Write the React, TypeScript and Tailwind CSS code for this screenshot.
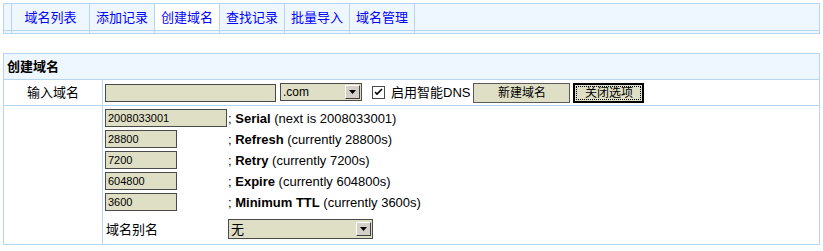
import React from "react";

const tabs = ["添加记录", "创建域名", "查找记录", "批量导入", "域名管理"];

const soaRows = [
  { value: "2008033001", wide: true, name: "Serial", note: "(next is 2008033001)" },
  { value: "28800", wide: false, name: "Refresh", note: "(currently 28800s)" },
  { value: "7200", wide: false, name: "Retry", note: "(currently 7200s)" },
  { value: "604800", wide: false, name: "Expire", note: "(currently 604800s)" },
  { value: "3600", wide: false, name: "Minimum TTL", note: "(currently 3600s)" },
];

function Arrow() {
  return (
    <div className="w-[15px] h-[14px] bg-[#d4d0c8] border-t border-l border-t-white border-l-white border-b border-r border-b-[#404040] border-r-[#404040] flex items-center justify-center">
      <svg width="7" height="4" viewBox="0 0 7 4">
        <path d="M0 0h7L3.5 4z" fill="#000" />
      </svg>
    </div>
  );
}

function Tab({ label, active, first }: { label: string; active?: boolean; first?: boolean }) {
  return (
    <div
      className={
        "flex flex-col border-r border-[#b5d5f2] " + (first ? "w-[78px]" : "w-[65px]")
      }
    >
      <div
        className={
          "h-[27px] flex items-center justify-center border-b border-[#b5d5f2] text-[#0000ff] " +
          (active ? "bg-white" : "")
        }
      >
        {label}
      </div>
      <div className="h-[2px]" />
    </div>
  );
}

export default function App() {
  return (
    <div className="w-[823px] h-[251px] bg-white pt-[3px] pl-[3px] text-[13px] leading-none text-black font-['Liberation_Sans','Noto_Sans_CJK_SC',sans-serif]">
      {/* tab bar */}
      <div className="w-[817px] flex border border-[#b5d5f2] bg-[#eef6ff]">
        <div className="w-[8px] flex flex-col border-r border-[#b5d5f2]">
          <div className="h-[27px] border-b border-[#b5d5f2]" />
          <div className="h-[2px]" />
        </div>
        <Tab label="域名列表" first />
        {tabs.map((t) => (
          <Tab key={t} label={t} active={t === "创建域名"} />
        ))}
        <div className="flex-1 flex flex-col">
          <div className="h-[27px] border-b border-[#b5d5f2]" />
          <div className="h-[2px]" />
        </div>
      </div>

      {/* create domain panel */}
      <div className="w-[817px] mt-[19px] border border-[#b5d5f2]">
        <div className="h-[26px] flex items-center pl-[3px] font-bold bg-[#eef6ff] border-b border-[#b5d5f2]">
          创建域名
        </div>

        <div className="h-[26px] flex items-center border-b border-[#b5d5f2]">
          <div className="w-[99px] h-full flex items-center justify-center border-r border-[#b5d5f2]">
            输入域名
          </div>
          <div className="flex items-center pl-[2px]">
            <div className="w-[171px] h-[18px] bg-[#dfdfc5] border border-[#4a4a4a]" />
            <div className="ml-[4px] mb-[2px] w-[82px] h-[18px] bg-[#dfdfc5] border border-[#4a4a4a] flex items-center justify-between pl-[2px] pr-px text-[12px]">
              <span>.com</span>
              <Arrow />
            </div>
            <div className="ml-[10px] w-[13px] h-[13px] bg-white border border-[#4a4a4a] flex items-center justify-center">
              <svg width="9" height="9" viewBox="0 0 9 9">
                <path d="M1 4l2 2 5-5" stroke="#000" strokeWidth="1.6" fill="none" />
              </svg>
            </div>
            <span className="ml-[6px]">启用智能DNS</span>
            <button className="ml-[3px] w-[97px] h-[20px] bg-[#dfdfc5] border border-[#5a5a5a] text-[12px] flex items-center justify-center">
              新建域名
            </button>
            <button className="ml-[3px] w-[71px] h-[20px] bg-[#dfdfc5] border-2 border-black text-[12px] p-px flex">
              <span className="flex-1 flex items-center justify-center border border-dotted border-black">
                关闭选项
              </span>
            </button>
          </div>
        </div>

        <div className="h-[138px] flex">
          <div className="w-[99px] border-r border-[#b5d5f2]" />
          <div className="pl-[2px] pt-[3px]">
            <div className="grid grid-cols-[123px_1fr] gap-y-[3px] items-center">
              {soaRows.map((r) => (
                <React.Fragment key={r.name}>
                  <div
                    className={
                      "h-[18px] bg-[#dfdfc5] border border-[#4a4a4a] flex items-center pl-[2px] text-[11px] " +
                      (r.wide ? "w-[122px]" : "w-[72px]")
                    }
                  >
                    {r.value}
                  </div>
                  <div className="whitespace-nowrap">
                    ; <b>{r.name}</b> {r.note}
                  </div>
                </React.Fragment>
              ))}
              <div className="mt-[5px] pl-px">域名别名</div>
              <div className="mt-[5px] w-[145px] h-[20px] bg-[#dfdfc5] border border-[#4a4a4a] flex items-center justify-between pl-[2px] pr-px">
                <span>无</span>
                <Arrow />
              </div>
            </div>
          </div>
        </div>
      </div>
    </div>
  );
}
